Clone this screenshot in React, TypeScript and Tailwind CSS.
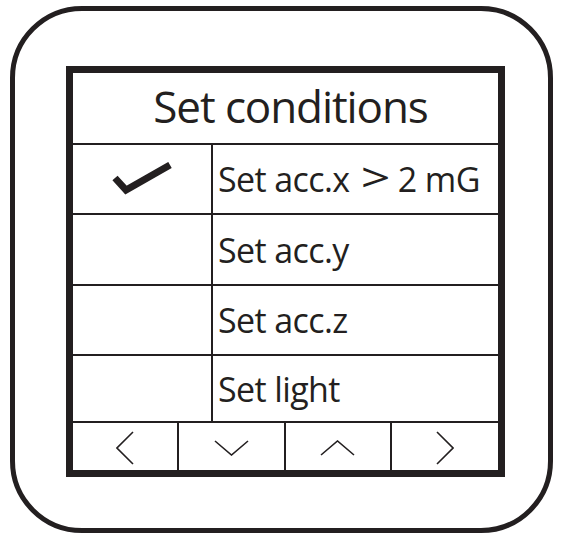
import React from 'react';

const rows = [
  { label: 'Set acc.x > 2 mG', checked: true, h: 'h-[70px]' },
  { label: 'Set acc.y', checked: false, h: 'h-[71px]' },
  { label: 'Set acc.z', checked: false, h: 'h-[70px]' },
  { label: 'Set light', checked: false, h: 'h-[67px]' },
];

const Check = () => (
  <svg width="60" height="34" viewBox="0 0 60 34" className="text-[#231f20]">
    <polyline points="3,16 14,28 58,3" fill="none" stroke="currentColor" strokeWidth="7" strokeLinejoin="miter" />
  </svg>
);

const Chevron = ({ dir }: { dir: 'left' | 'down' | 'up' | 'right' }) => {
  const pts = {
    left: '17,1 1,17 17,33',
    right: '1,1 17,17 1,33',
    down: '1,1 17.5,15 34,1',
    up: '1,15 17.5,1 34,15',
  }[dir];
  const vertical = dir === 'left' || dir === 'right';
  return (
    <svg
      width={vertical ? 18 : 35}
      height={vertical ? 34 : 16}
      viewBox={vertical ? '0 0 18 34' : '0 0 35 16'}
      className="text-[#231f20]"
    >
      <polyline points={pts} fill="none" stroke="currentColor" strokeWidth="1.6" />
    </svg>
  );
};

export default function App() {
  return (
    <div className="w-[563px] h-[540px] bg-white pt-[6px] pl-[10px] font-['Open_Sans',sans-serif] text-[#231f20]">
      <div className="w-[543px] h-[527px] border-[5px] border-[#231f20] rounded-[72px] pt-[55px] pl-[51px]">
        <div className="w-[439px] h-[411px] border-[7px] border-[#231f20] flex flex-col">
          <div className="h-[72px] border-b-2 border-[#231f20] flex items-center justify-center pl-[10px]">
            <span className="text-[44px] leading-none tracking-[-1.1px] -mt-[4px]">Set conditions</span>
          </div>

          {rows.map((row) => (
            <div key={row.label} className={`${row.h} border-b-2 border-[#231f20] flex`}>
              <div className="w-[140px] border-r-2 border-[#231f20] flex items-center justify-center">
                {row.checked && <Check />}
              </div>
              <div className="flex-1 flex items-center pl-[5px]">
                <span className="text-[34px] leading-none tracking-[-0.6px] flex items-center">
                  {row.label.includes('>') ? (
                    <>
                      <span>Set acc.x</span>
                      <span className="inline-block text-[40px] leading-none scale-x-[1.3] ml-[15px] mr-[11px] -mt-[4px]">&gt;</span>
                      <span>2 mG</span>
                    </>
                  ) : (
                    row.label
                  )}
                </span>
              </div>
            </div>
          ))}

          <div className="h-[47px] grid grid-cols-4">
            <div className="border-r-2 border-[#231f20] flex items-center justify-center pt-[2px]">
              <Chevron dir="left" />
            </div>
            <div className="border-r-2 border-[#231f20] flex items-center justify-center pt-[2px]">
              <Chevron dir="down" />
            </div>
            <div className="border-r-2 border-[#231f20] flex items-center justify-center pt-[2px]">
              <Chevron dir="up" />
            </div>
            <div className="flex items-center justify-center pt-[2px]">
              <Chevron dir="right" />
            </div>
          </div>
        </div>
      </div>
    </div>
  );
}
